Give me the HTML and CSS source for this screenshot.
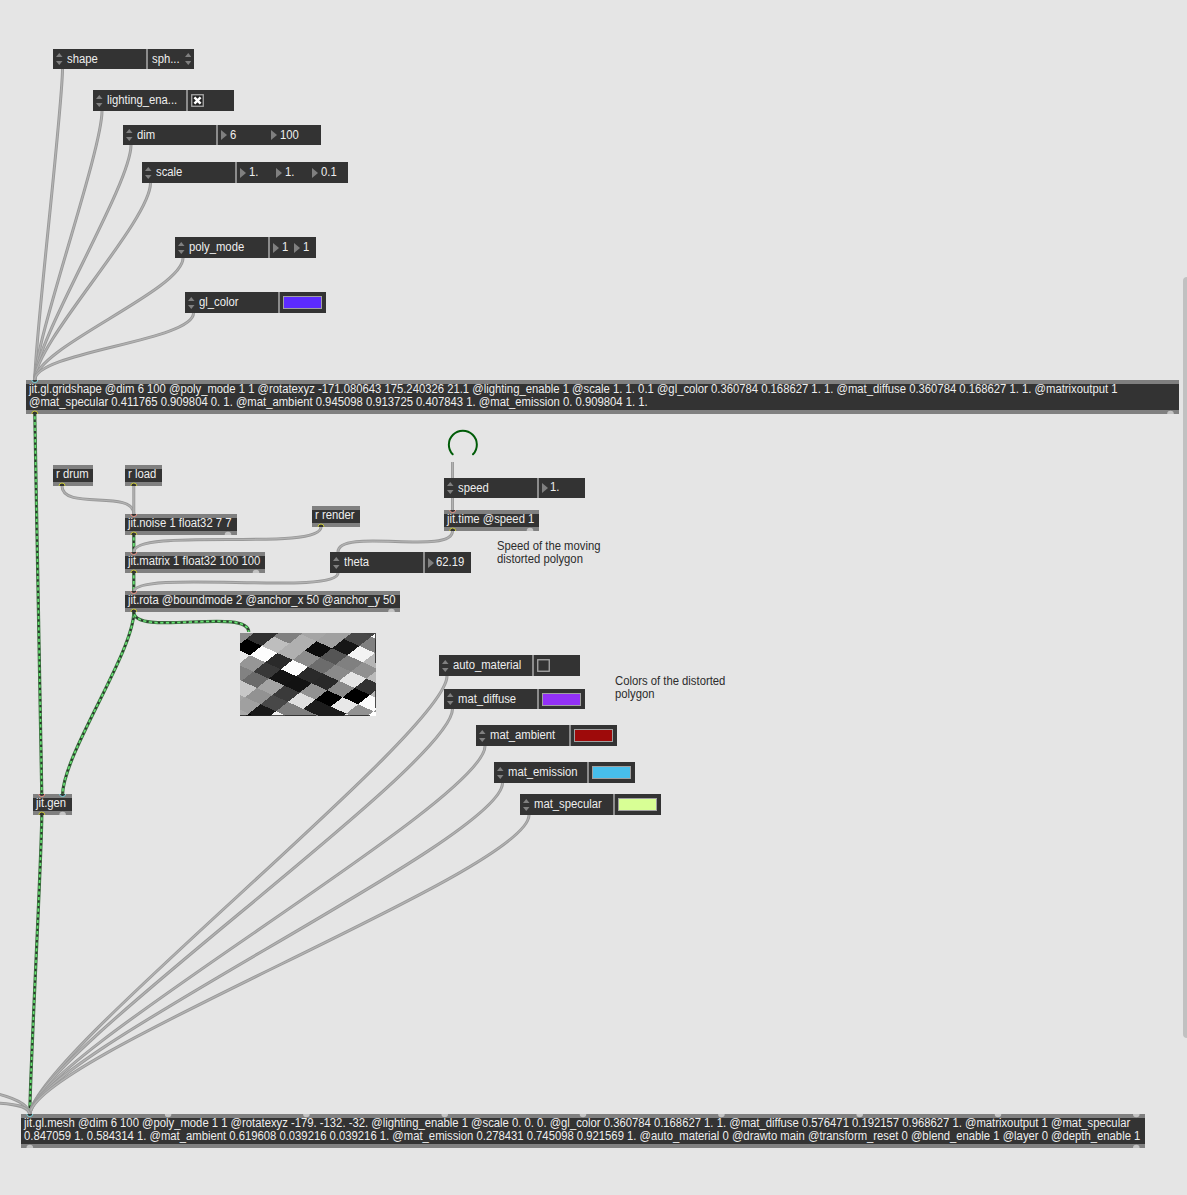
FILE: index.html
```html
<!DOCTYPE html>
<html lang="en">
<head>
<meta charset="utf-8">
<title>Jitter patch</title>
<link rel="stylesheet" href="styles.css">
</head>
<body>
<main class="canvas" id="canvas">
  <svg class="noise" viewBox="0 0 136 83" id="noise"></svg>
  <div class="scroll"></div>
</main>
<script src="patch.js"></script>
</body>
</html>
```
FILE: styles.css
```css
body { margin: 0; background: #e5e5e5; overflow: hidden; }
.canvas {
  position: relative; width: 1187px; height: 1195px; overflow: hidden;
  background: #e5e5e5; color: #eee;
  font: 12px/13px "Liberation Sans", Arial, sans-serif;
  white-space: pre;
}
.text { display: block; width: max-content; transform: scaleX(.94); transform-origin: 0 0; }
.attr { position: absolute; display: flex; align-items: center; background: #333; }
.attr .name { box-sizing: border-box; width: 93px; height: 100%; padding-left: 3px; display: flex; align-items: center; gap: 4.5px; }
.attr .value { flex: 1; height: 100%; border-left: 2px solid #8c8c8c; display: flex; align-items: center; }
.updown { width: 6.5px; height: 12px; fill: #808080; flex: none; }
.num { display: flex; align-items: center; gap: 2.7px; padding-left: 3.3px; box-sizing: border-box; }
.num.float { gap: 1.8px; }
.num.float .text { margin-top: -1px; }
.tri { width: 6px; height: 10px; fill: #808080; flex: none; }
.menu { flex: 1; display: flex; justify-content: space-between; align-items: center; padding: 0 3px 0 3.5px; }
.swatch { margin-left: 3px; box-sizing: border-box; width: 39px; height: 13px; border: 1px solid #a0a0a0; }
.check { margin-left: 3px; width: 13px; height: 13px; }
.object {
  position: absolute; box-sizing: border-box; background: #333;
  border: solid #808080; border-width: 4px 0; padding-left: 3px;
}
.object .text { margin-top: -1px; }
.comment { position: absolute; color: #2c2c2c; }
.wires { position: absolute; left: 0; top: 0; width: 1187px; height: 1195px; fill: none; }
.wire-edge { stroke: #999; stroke-width: 3; }
.wire-core { stroke: #b2b2b2; stroke-width: 1.2; }
.matrix-edge { stroke: #3d7541; stroke-width: 3.2; }
.matrix-core { stroke: #67e273; stroke-width: 1.5; }
.matrix-dash { stroke: #2c382d; stroke-width: 2; stroke-dasharray: 2.4 3.3; }
.port { fill: #333; stroke-width: 1; }
.port-idle { fill: #c4c4c4; }
.loop { stroke: #005c08; stroke-width: 2; stroke-linecap: round; }
.noise { position: absolute; left: 240px; top: 633px; width: 136px; height: 83px; overflow: hidden; background: #999; }
.scroll { position: absolute; left: 1183px; top: 277px; width: 8px; height: 761px; border-radius: 4px; background: #c1c1c1; }
```
FILE: patch.js
```js
const canvas = document.getElementById('canvas');
const text = s => `<span class="text">${s}</span>`;
const updown = '<svg class="updown" viewBox="0 0 6.5 12"><path d="M3.25 0 6.5 4H0zM0 8H6.5L3.25 12z"/></svg>';
const tri = '<svg class="tri" viewBox="0 0 6 10"><path d="M0 0 6 5 0 10z"/></svg>';
const num = (v, w, kind = '') => `<span class="num ${kind}" style="width:${w}px">${tri}${text(v)}</span>`;
const swatch = c => `<span class="swatch" style="background:${c}"></span>`;
const check = on => `<svg class="check" viewBox="0 0 13 13"><rect x=".75" y=".75" width="11.5" height="11.5" fill="${on ? '#222' : 'none'}" stroke="#a8a8a8" stroke-width="1.3"/>${on ? '<path d="M3.4 3.4 9.6 9.6M9.6 3.4 3.4 9.6" stroke="#fff" stroke-width="2.5"/>' : ''}</svg>`;

const attrs = [
  [53, 49, 141, 20, 'shape', `<span class="menu">${text('sph...')}${updown}</span>`],
  [93, 90, 141, 21, 'lighting_ena...', check(true)],
  [123, 125, 198, 20, 'dim', num('6', 50) + num('100', 50)],
  [142, 162, 206, 21, 'scale', num('1.', 36) + num('1.', 36) + num('0.1', 36)],
  [175, 237, 141, 21, 'poly_mode', num('1', 21) + num('1', 21)],
  [185, 292, 141, 21, 'gl_color', swatch('#5c2bff')],
  [444, 478, 141, 20, 'speed', num('1.', 44, 'float')],
  [330, 552, 141, 21, 'theta', num('62.19', 44, 'float')],
  [439, 655, 141, 21, 'auto_material', check(false)],
  [444, 689, 141, 20, 'mat_diffuse', swatch('#9331f7')],
  [476, 725, 141, 21, 'mat_ambient', swatch('#9e0a0a')],
  [494, 762, 141, 21, 'mat_emission', swatch('#47beeb')],
  [520, 794, 141, 21, 'mat_specular', swatch('#d8ff95')]
];
const objects = [
  [26, 380, 1153, 34, 'jit.gl.gridshape @dim 6 100 @poly_mode 1 1 @rotatexyz -171.080643 175.240326 21.1 @lighting_enable 1 @scale 1. 1. 0.1 @gl_color 0.360784 0.168627 1. 1. @mat_diffuse 0.360784 0.168627 1. 1. @matrixoutput 1\n@mat_specular 0.411765 0.909804 0. 1. @mat_ambient 0.945098 0.913725 0.407843 1. @mat_emission 0. 0.909804 1. 1.'],
  [53, 465, 40, 21, 'r drum'],
  [125, 465, 37, 21, 'r load'],
  [125, 514, 112, 21, 'jit.noise 1 float32 7 7'],
  [312, 506, 48, 21, 'r render'],
  [125, 552, 140, 21, 'jit.matrix 1 float32 100 100'],
  [444, 510, 95, 21, 'jit.time @speed 1'],
  [125, 591, 275, 21, 'jit.rota @boundmode 2 @anchor_x 50 @anchor_y 50'],
  [33, 794, 39, 21, 'jit.gen'],
  [21, 1114, 1124, 34, 'jit.gl.mesh @dim 6 100 @poly_mode 1 1 @rotatexyz -179. -132. -32. @lighting_enable 1 @scale 0. 0. 0. @gl_color 0.360784 0.168627 1. 1. @mat_diffuse 0.576471 0.192157 0.968627 1. @matrixoutput 1 @mat_specular\n0.847059 1. 0.584314 1. @mat_ambient 0.619608 0.039216 0.039216 1. @mat_emission 0.278431 0.745098 0.921569 1. @auto_material 0 @drawto main @transform_reset 0 @blend_enable 1 @layer 0 @depth_enable 1']
];
const comments = [
  [497, 540, 'Speed of the moving\ndistorted polygon'],
  [615, 675, 'Colors of the distorted\npolygon']
];
const box = ([x, y, w, h]) => `left:${x}px;top:${y}px;width:${w}px;height:${h}px`;
let html = attrs.map(a => `<div class="attr" style="${box(a)}"><span class="name">${updown}${text(a[4])}</span><span class="value">${a[5]}</span></div>`).join('');
html += objects.map(o => `<div class="object" style="${box(o)}">${text(o[4])}</div>`).join('');
html += comments.map(c => `<div class="comment" style="left:${c[0]}px;top:${c[1]}px">${text(c[2])}</div>`).join('');

// Patch cords: x1, y1, x2, y2, vertical tension
const curve = ([x1, y1, x2, y2, k]) => `M${x1} ${y1}C${x1} ${y1 + k} ${x2} ${y2 - k} ${x2} ${y2}`;
const cords = [
  [62.5, 69, 34.8, 380, 40], [102, 111, 34.8, 380, 40], [131, 145, 34.8, 380, 40],
  [150.5, 183, 34.8, 380, 38], [183, 258, 34.8, 380, 32], [193.5, 313, 34.8, 380, 28],
  [62, 486, 133.8, 514, 25], [133.8, 486, 133.8, 514, 10], [321, 527, 133.8, 552, 25],
  [452.5, 462, 452.5, 478, 5], [452.5, 498, 452.5, 511, 5], [452.5, 531, 338, 552, 25],
  [338, 573, 133.8, 592, 23],
  [447, 676, 29.8, 1115, 56], [452.5, 709, 29.8, 1115, 56], [485, 746, 29.8, 1115, 56],
  [502.5, 783, 29.8, 1115, 56], [529, 815, 29.8, 1115, 56]
].map(curve).concat(['M-2 1094C14 1098 29.8 1105 29.8 1115', 'M-2 1103C14 1104 29.8 1106 29.8 1115']);
const matrixCords = [
  [34.8, 414, 41.8, 795, 40], [133.8, 535, 133.8, 552, 5], [133.8, 573, 133.8, 591, 5],
  [133.8, 612, 62.6, 795, 40], [133.8, 612, 248.7, 632, 25], [41.8, 815, 29.8, 1115, 40]
].map(curve);
const path = (cls, d) => `<path class="${cls}" d="${d}"/>`;
let svg = matrixCords.map(d => path('matrix-edge', d) + path('matrix-core', d) + path('matrix-dash', d)).join('');
svg += cords.map(d => path('wire-edge', d) + path('wire-core', d)).join('');
svg += '<path class="loop" d="M452.7 454.3A14 14 0 1 1 473 454.3"/>';

const inlet = (x, y, c) => `<path class="port" stroke="${c}" d="M${x - 3} ${y}A3 2.5 0 0 0 ${x + 3} ${y}"/>`;
const outlet = (x, y) => `<path class="port" stroke="#c9c93c" d="M${x - 3} ${y}A3 3 0 0 1 ${x + 3} ${y}"/>`;
const red = '#f09a8c', cyan = '#7fdbe4';
svg += [[34.8, 380, cyan], [133.8, 514, red], [133.8, 552, red], [133.8, 591, red], [452.7, 510, red], [41.8, 794, red], [62.6, 794, cyan], [29.8, 1114, cyan]].map(p => inlet(...p)).join('');
svg += [[34.8, 414], [62, 486], [133.8, 486], [133.8, 535], [133.8, 573], [133.8, 612], [321, 527], [452.7, 531], [41.8, 815]].map(p => outlet(...p)).join('');
svg += [[1170.5, 414], [228, 535], [256, 573], [391.5, 612], [530, 531], [62.6, 815], [29.8, 1148], [1136.3, 1148]].map(([x, y]) => `<path class="port-idle" d="M${x - 3.3} ${y}A3.3 3.3 0 0 1 ${x + 3.3} ${y}z"/>`).join('');
svg += [168.1, 306.4, 444.7, 583, 721.4, 859.7, 998, 1136.3].map(x => `<path class="port-idle" d="M${x - 3.3} 1114A3.3 3.3 0 0 0 ${x + 3.3} 1114z"/>`).join('');
canvas.insertAdjacentHTML('beforeend', html + `<svg class="wires" viewBox="0 0 1187 1195">${svg}</svg>`);

// Rotated noise cells: row, first column, grey levels
const rows = [
  [5, 2, [160, 68, 250]],
  [4, 1, [160, 160, 72, 128, 180]],
  [3, -1, [130, 130, 165, 160, 22, 243, 181]],
  [2, -2, [48, 48, 128, 176, 12, 85, 128, 144, 187]],
  [1, -2, [140, 48, 190, 176, 140, 108, 138, 228, 50, 180]],
  [0, -2, [140, 0, 253, 42, 252, 42, 40, 138, 0, 252]],
  [-1, -1, [232, 150, 56, 20, 18, 146, 0, 232, 146, 255]],
  [-2, 0, [130, 106, 164, 58, 222, 28, 28, 240]],
  [-3, 0, [200, 200, 146, 72, 126, 126, 28]],
  [-4, 1, [165, 160, 24, 240, 30]],
  [-5, 1, [170, 170, 0]]
];
let cells = '';
for (const [j, start, levels] of rows)
  levels.forEach((v, n) => { cells += `<rect x="${start + n - 0.5}" y="${j - 0.5}" width="1.02" height="1.02" fill="rgb(${v},${v},${v})"/>`; });
document.getElementById('noise').innerHTML =
  `<g shape-rendering="crispEdges" transform="matrix(15.47 7 11.9 -9.33 23.3 21.3)">${cells}</g><path d="M0 82.6H76M98 82.6H130M135.6 0V30M135.6 57V75" stroke="#222" stroke-width=".9"/>`;
```
